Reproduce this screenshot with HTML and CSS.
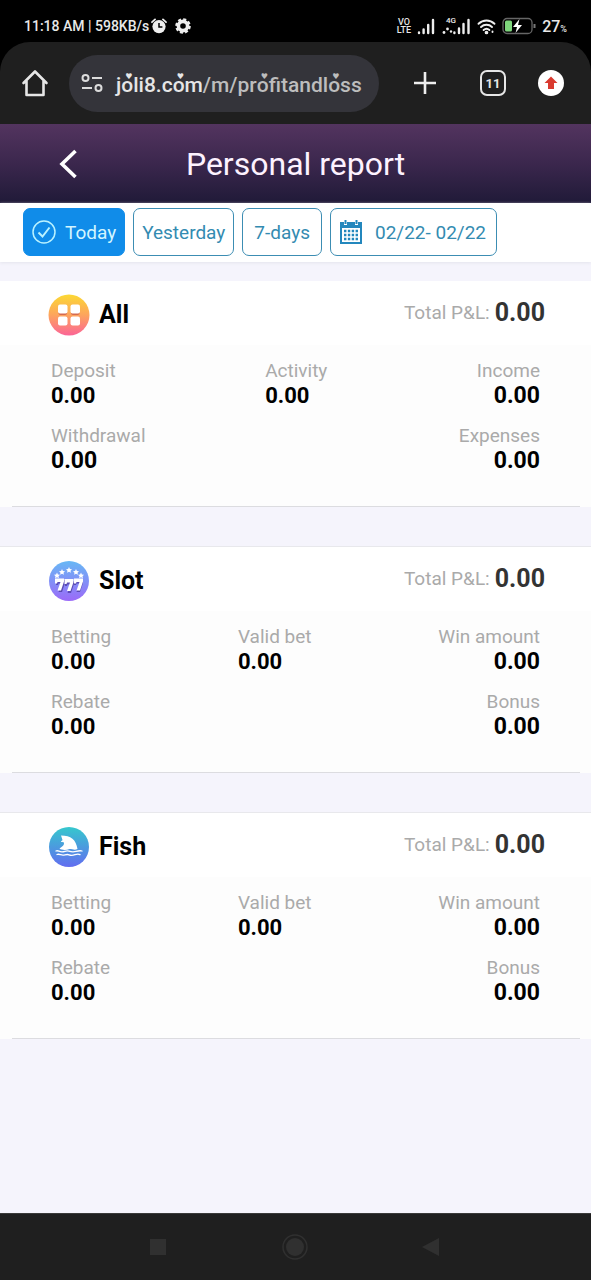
FILE: index.html
```html
<!DOCTYPE html>
<html lang="en">
<head>
<meta charset="utf-8">
<meta name="viewport" content="width=device-width, initial-scale=1">
<title>Personal report</title>
<link rel="stylesheet" href="styles.css">
</head>
<body>
<div class="statusbar">
  <div class="status-left">
    <span>11:18 AM | 598KB/s</span>
    <svg class="alarm" width="16" height="16" viewBox="0 0 16 16"><circle cx="8" cy="8.6" r="6.6" fill="#eee"/><path d="M1 4.2 4 1.4M15 4.2 12 1.4" stroke="#eee" stroke-width="1.8" stroke-linecap="round"/><path d="M8 5v4h3.4" stroke="#000" stroke-width="1.5" fill="none"/></svg>
    <svg class="gear" width="16" height="16" viewBox="0 0 16 16"><circle cx="8" cy="8" r="6.6" fill="none" stroke="#eee" stroke-width="2.4" stroke-dasharray="3 2.184"/><circle cx="8" cy="8" r="4.6" fill="none" stroke="#eee" stroke-width="3.6"/></svg>
  </div>
  <div class="status-right">
    <span class="volte">VO<br>LTE</span>
    <svg width="19" height="17" viewBox="0 0 19 17" stroke="#eee" stroke-width="2.4" stroke-linecap="round"><path d="M2 14.5v.5M6.6 11.500v3.500M11.200 7v8M16 2v13"/></svg>
    <svg class="sim" width="29" height="21" viewBox="0 0 29 21"><g stroke="#eee" stroke-width="2.4" stroke-linecap="round"><path d="M12.400 16.500v.5M17 12.500v4.500M21.500 8v9M26.500 4v13"/></g><g fill="#eee"><circle cx="2" cy="16.500" r="1.400"/><circle cx="5.500" cy="13" r="1.400"/><circle cx="9" cy="15.500" r="1.200"/></g><text x="4" y="7" class="tiny">4G</text></svg>
    <svg width="19" height="17" viewBox="0 0 19 17" fill="none" stroke="#eee" stroke-width="1.900" stroke-linecap="round"><path d="M1.500 5.800a11.500 11.500 0 0 1 16 0M4 9a8 8 0 0 1 11 0M6.600 12a4.300 4.300 0 0 1 5.800 0"/><circle cx="9.500" cy="14.500" r=".9" fill="#eee"/><path d="M15.500 13.500v.5"/></svg>
    <svg width="34" height="18" viewBox="0 0 34 18"><rect x="1" y="1.500" width="29" height="15" rx="4" fill="none" stroke="#666" stroke-width="1.300"/><rect x="3" y="3.500" width="7" height="11" rx="1.500" fill="#7ed67c"/><path d="M32.500 7v4" stroke="#777" stroke-width="2"/><path d="M17.500 2 11 10h4l-1.500 6L20 8h-4z" fill="#fff"/></svg>
    <span class="battery">27<small>%</small></span>
  </div>
</div>

<div class="browser">
  <button class="icon-btn" aria-label="Home"><svg width="28" height="28" viewBox="0 0 28 28" fill="none" stroke="#e6e6e6" stroke-width="2.600" stroke-linejoin="round" stroke-linecap="round"><path d="M2.500 14 14 2.500 25.500 14M5.500 12V26h17V12"/></svg></button>
  <div class="address">
    <svg width="22" height="18" viewBox="0 0 22 18" fill="none" stroke="#dcdcdc" stroke-width="2"><circle cx="4.500" cy="4" r="3"/><path d="M11 4h10M1 14h10"/><circle cx="17.500" cy="14" r="3"/></svg>
    <span class="url">j<span class="heart">o</span>li8.c<span class="heart">o</span>m<span class="path">/m/pr<span class="heart">o</span>fitandl<span class="heart">o</span>ss</span></span>
  </div>
  <button class="icon-btn" aria-label="New tab"><svg width="26" height="26" viewBox="0 0 26 26"><path d="M13 2v22M2 13h22" stroke="#eee" stroke-width="2.600"/></svg></button>
  <button class="tabs" aria-label="Tabs">11</button>
  <button class="icon-btn" aria-label="Update"><svg width="26" height="26" viewBox="0 0 26 26"><circle cx="13" cy="13" r="13" fill="#fff"/><path d="m13 6.500 6.500 6.500H16v6h-6v-6H6.500z" fill="#d93a2f"/></svg></button>
</div>

<header class="titlebar">
  <button class="back" aria-label="Back"><svg width="20" height="32" viewBox="0 0 20 32" fill="none" stroke="#fff" stroke-width="3.600"><path d="M17.500 3 4 16l13.500 13"/></svg></button>
  <h1>Personal report</h1>
</header>

<div class="filters">
  <button class="chip active"><svg width="24" height="24" viewBox="0 0 24 24" fill="none" stroke="#b9f2ff" stroke-width="1.500"><circle cx="12" cy="12" r="11"/><path d="m6.500 12.500 4 4 7-9" stroke-width="2"/></svg><span>Today</span></button>
  <button class="chip">Yesterday</button>
  <button class="chip seven">7-days</button>
  <button class="chip date"><svg width="22" height="24" viewBox="0 0 22 24"><path d="M0 2h22v22H0z" fill="#2387bd"/><path d="M2 8h18v14H2z" fill="#fff"/><path d="M4 2h3v3H4zM15 2h3v3h-3z" fill="#fff"/><path d="M5.500 0v4M16.500 0v4" stroke="#2387bd" stroke-width="2"/><path d="M4 11h14M4 15h14M4 19h14" stroke="#2387bd" stroke-width="2.400" stroke-dasharray="2.400 1.460"/></svg><span>02/22- 02/22</span></button>
</div>

<main class="report">
  <section class="card">
    <div class="card-head">
      <h2><svg width="42" height="42" viewBox="0 0 42 42"><defs><linearGradient id="g-all" x2="0" y2="1"><stop stop-color="#fcd933"/><stop offset=".5" stop-color="#fda45d"/><stop offset="1" stop-color="#fb6596"/></linearGradient></defs><circle cx="21" cy="21" r="20.500" fill="url(#g-all)"/><g fill="#d56a50"><rect x="10.500" y="12" width="8.500" height="9" rx="2"/><rect x="23" y="12" width="8.500" height="9" rx="2"/></g><g fill="#fff"><rect x="10" y="10.500" width="9.500" height="9" rx="2"/><rect x="22.500" y="10.500" width="9.500" height="9" rx="2"/><rect x="10" y="22.500" width="9.500" height="9" rx="2"/><rect x="22.500" y="22.500" width="9.500" height="9" rx="2"/></g></svg>All</h2>
      <p class="total"><span>Total P&amp;L:</span> <b>0.00</b></p>
    </div>
    <div class="card-body">
      <div class="row"><div class="stat"><span>Deposit</span><b>0.00</b></div><div class="stat"><span>Activity</span><b>0.00</b></div><div class="stat end"><span>Income</span><b>0.00</b></div></div>
      <div class="row"><div class="stat large"><span>Withdrawal</span><b>0.00</b></div><div class="stat end"><span>Expenses</span><b>0.00</b></div></div>
    </div>
  </section>

  <section class="card">
    <div class="card-head">
      <h2><svg width="42" height="42" viewBox="0 0 42 42"><defs><linearGradient id="g-slot" x2="0" y2="1"><stop stop-color="#68b8f5"/><stop offset="1" stop-color="#9b6af8"/></linearGradient><path id="seven" d="M0 0h9v3L6 12H2.500L5.500 3.500H2.500L2 5H0z"/><path id="star" d="m0-3 .9 2 2.100.2L1.500.7 1.900 2.800 0 1.700-1.900 2.800-1.500.7-3-.8-.9-1z"/></defs><circle cx="21" cy="21" r="20" fill="url(#g-slot)"/><g fill="#5b4bb4"><use href="#seven" x="8" y="20"/><use href="#seven" x="17" y="21"/><use href="#seven" x="26" y="20"/></g><g fill="#fff"><use href="#seven" x="7" y="18.500"/><use href="#seven" x="16.500" y="19"/><use href="#seven" x="26" y="18.500"/><use href="#star" x="9" y="15.500"/><use href="#star" x="14" y="12"/><use href="#star" x="21" y="10"/><use href="#star" x="28" y="12"/><use href="#star" x="33" y="15.500"/></g></svg>Slot</h2>
      <p class="total"><span>Total P&amp;L:</span> <b>0.00</b></p>
    </div>
    <div class="card-body">
      <div class="row"><div class="stat"><span>Betting</span><b>0.00</b></div><div class="stat"><span>Valid bet</span><b>0.00</b></div><div class="stat end"><span>Win amount</span><b>0.00</b></div></div>
      <div class="row"><div class="stat"><span>Rebate</span><b>0.00</b></div><div class="stat end"><span>Bonus</span><b>0.00</b></div></div>
    </div>
  </section>

  <section class="card">
    <div class="card-head">
      <h2><svg width="42" height="42" viewBox="0 0 42 42"><defs><linearGradient id="g-fish" x2="0" y2="1"><stop stop-color="#35c8cd"/><stop offset="1" stop-color="#626df0"/></linearGradient></defs><circle cx="21" cy="21" r="20" fill="url(#g-fish)"/><path d="M13 9.500c10 0 15 4 16.500 13.500-3 1.500-5 0-8 0-3 1-7 1.500-10-.5 3-2 5-3.500 4.500-6-1-.5-2.500-.2-3-1 .6-.8 1.200-.6 1.500-1.500-.5-1.500-1-3-1.500-4.500z" fill="#fff"/><g fill="none" stroke="#fff" stroke-width="1.300" stroke-linecap="round"><path d="M8 25c2-1 3 .8 6 .8s4-1.500 7-.6 4 1 7 .2 4-1 6-.4M9 28.500c2-1 4 .7 6 .6s4-1.200 6-.3 4 .6 6-.1 4-.6 5-.1"/></g></svg>Fish</h2>
      <p class="total"><span>Total P&amp;L:</span> <b>0.00</b></p>
    </div>
    <div class="card-body">
      <div class="row"><div class="stat"><span>Betting</span><b>0.00</b></div><div class="stat"><span>Valid bet</span><b>0.00</b></div><div class="stat end"><span>Win amount</span><b>0.00</b></div></div>
      <div class="row"><div class="stat"><span>Rebate</span><b>0.00</b></div><div class="stat end"><span>Bonus</span><b>0.00</b></div></div>
    </div>
  </section>
</main>

<nav class="sysnav">
  <button aria-label="Recent apps"><svg width="26" height="26" viewBox="0 0 26 26"><path d="M5 5h16v16H5z" fill="#303030"/></svg></button>
  <button aria-label="Home screen"><svg width="26" height="26" viewBox="0 0 26 26"><circle cx="13" cy="13" r="12" fill="none" stroke="#303030" stroke-width="1.500"/><circle cx="13" cy="13" r="9" fill="#303030"/></svg></button>
  <button aria-label="Go back"><svg width="26" height="26" viewBox="0 0 26 26"><path d="M21 4v18L4 13z" fill="#303030"/></svg></button>
</nav>
</body>
</html>
```
FILE: styles.css
```css
* { box-sizing: border-box; }

body {
  margin: 0;
  min-height: 100vh;
  display: flex;
  flex-direction: column;
  background: #000;
  font-family: Roboto, "Liberation Sans", sans-serif;
}

h1, h2, p { margin: 0; }
svg { display: block; flex: none; }
button { font: inherit; border: 0; padding: 0; background: none; color: inherit; }

.statusbar {
  height: 42px;
  padding: 10px 24px 0;
  display: flex;
  justify-content: space-between;
  align-items: center;
  color: #e8e8e8;
  font-size: 14px;
  font-weight: 500;
}
.status-left, .status-right { display: flex; align-items: center; }
.status-left { gap: 2px; }
.gear { margin-left: 6px; }
.status-right { gap: 6px; }
.volte { font-size: 9px; line-height: 8px; text-align: center; }
.tiny { font-size: 8px; fill: #eee; }
.battery { font-size: 16px; }
.battery small { font-size: 9px; }

.browser {
  height: 82px;
  padding: 0 27px 0 21px;
  display: flex;
  align-items: center;
  background: #1f1f1f;
  border-radius: 30px 30px 0 0;
}
.icon-btn { display: block; }
.address {
  flex: 1;
  height: 57px;
  margin: 0 33px 0 20px;
  padding-left: 12px;
  display: flex;
  align-items: center;
  gap: 13px;
  border-radius: 29px;
  background: #34343a;
  white-space: nowrap;
}
.url { padding-top: 3px; font-size: 21px; line-height: 24px; font-weight: 500; color: #e6e6e6; }
.path { color: #bdbdbd; }
.heart { position: relative; }
.heart::before {
  content: "♥";
  position: absolute;
  left: 4px;
  top: 0;
  font: 8px/8px "DejaVu Sans", sans-serif;
}
.tabs {
  width: 26px;
  height: 26px;
  margin: 0 32px 0 42px;
  border: 2px solid #e6e6e6;
  border-radius: 7px;
  color: #e6e6e6;
  font-size: 13px;
  font-weight: 700;
}

.titlebar {
  height: 79px;
  display: grid;
  grid-template-columns: 120px 1fr 120px;
  align-items: center;
  background: linear-gradient(#53345f, #3b274d 50%, #201a38);
  color: #fdf2ff;
}
.back { justify-self: start; margin-left: 58px; }
.titlebar h1 { font-size: 32px; line-height: 40px; font-weight: 400; text-align: center; }

.filters {
  padding: 5px 23px 6px;
  display: flex;
  gap: 8px;
  background: #fff;
  box-shadow: 0 1px 3px #e4e4ec;
  z-index: 1;
}
.chip {
  height: 48px;
  padding: 0 8px;
  display: flex;
  align-items: center;
  border: 1px solid #3c8db3;
  border-radius: 7px;
  background: #fff;
  color: #338bb1;
  font-size: 19px;
}
.chip.active { gap: 9px; background: #108ce9; border-color: #108ce9; color: #d3f5ff; }
.chip.seven { padding: 0 11px; }
.chip.date { gap: 13px; padding: 0 10px 0 9px; }

.report {
  flex: 1;
  padding: 19px 0;
  display: flex;
  flex-direction: column;
  gap: 40px;
  background: #f5f4fc;
}
.card { background: #fdfdfd; box-shadow: 0 -1px 0 #e8e8ec; }
.card:first-child { box-shadow: none; }
.card-head {
  height: 64px;
  padding: 13px 46px 0 48px;
  display: flex;
  justify-content: space-between;
  align-items: flex-start;
  background: #fff;
}
.card h2 {
  display: flex;
  align-items: center;
  gap: 9px;
  font-size: 25px;
  line-height: 42px;
  font-weight: 700;
  color: #000;
}
.total { display: flex; align-items: center; gap: 5px; font-size: 19px; line-height: 37px; color: #aaa; }
.total b { font-size: 25px; color: #333; }

.card-body { padding-top: 14px; display: grid; gap: 16px; }
.card-body::after {
  content: "";
  height: 1px;
  margin: 17px 11px 0 12px;
  background: #dcdce0;
}
.row { padding: 0 51px; display: flex; justify-content: space-between; }
.stat { display: flex; flex-direction: column; }
.stat span { font-size: 19px; line-height: 24px; color: #aaa; }
.stat b { font-size: 22px; line-height: 25px; color: #000; }
.stat.large b, .stat.end b { font-size: 23px; }
.end { text-align: right; }

.sysnav {
  height: 67px;
  padding: 0 147px 0 145px;
  display: flex;
  justify-content: space-between;
  align-items: center;
  background: #1f1f1f;
  border-top: 1px solid #3a3a3a;
}
```
